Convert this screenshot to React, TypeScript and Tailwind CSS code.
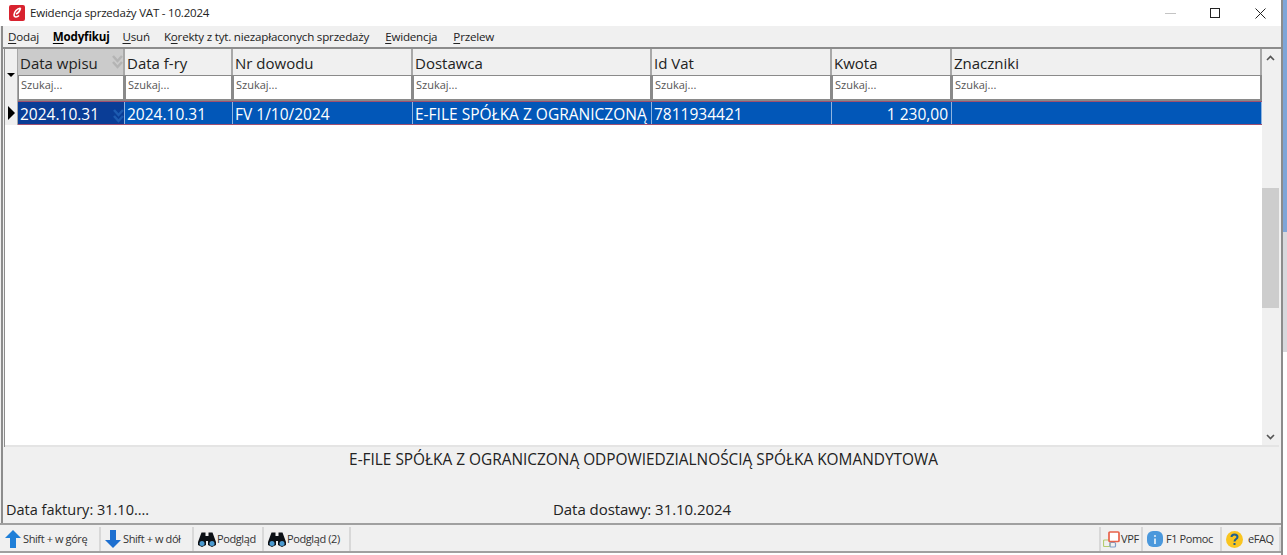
import React from "react";

const columns = [
    {label: "Data wpisu", width: "w-[107px]", value: "2024.10.31"},
    {label: "Data f-ry", width: "w-[108px]", value: "2024.10.31"},
    {label: "Nr dowodu", width: "w-[180px]", value: "FV 1/10/2024"},
    {label: "Dostawca", width: "w-[239px]", value: "E-FILE SPÓŁKA Z OGRANICZONĄ"},
    {label: "Id Vat", width: "w-[180px]", value: "7811934421"},
    {label: "Kwota", width: "w-[120px]", value: "1 230,00"},
    {label: "Znaczniki", width: "w-[310px]", value: ""},
];

function Mnemonic(props: {before?: string, letter: string, after: string, bold?: boolean, className?: string}) {
    return <span className={"whitespace-nowrap " + (props.bold ? "font-bold text-black " : "") + (props.className ?? "")}>
        {props.before}<span className="underline underline-offset-2">{props.letter}</span>{props.after}
    </span>
}

function ArrowUp() {
    return <svg width="16" height="18" viewBox="0 0 16 18" className="shrink-0">
        <path d="M8 0 L16 8 L11 8 L11 18 L5 18 L5 8 L0 8 Z" fill="#1f7fd8" />
    </svg>
}

function ArrowDown() {
    return <svg width="16" height="18" viewBox="0 0 16 18" className="shrink-0">
        <path d="M5 0 L11 0 L11 10 L16 10 L8 18 L0 10 L5 10 Z" fill="#1d6fd0" />
    </svg>
}

function Binoculars() {
    return <svg width="18" height="15" viewBox="0 0 18 15" className="shrink-0">
        <path d="M3.5 0.5 H7.5 V4 H10.5 V0.5 H14.5 L18 10 V13 L14 15 L10 13 V9 H8 V13 L4 15 L0 13 V10 Z" fill="#0c1016" />
        <circle cx="4" cy="11.5" r="2.5" fill="#4a9ad0" />
        <circle cx="14" cy="11.5" r="2.5" fill="#4a9ad0" />
    </svg>
}

function VpfIcon() {
    return <svg width="17" height="17" viewBox="0 0 17 17" className="shrink-0">
        <rect x="0.5" y="9" width="6.5" height="6.5" rx="1" fill="none" stroke="#b4cc70" strokeWidth="1.2" />
        <rect x="7" y="11.5" width="5.5" height="4.5" rx="1" fill="none" stroke="#7f9cc6" strokeWidth="1.2" />
        <rect x="6" y="1" width="10" height="9.5" rx="1" fill="#fff" stroke="#e8624a" strokeWidth="1.7" />
    </svg>
}

function InfoIcon() {
    return <svg width="16" height="16" viewBox="0 0 16 16" className="shrink-0">
        <rect width="16" height="16" rx="6" fill="#4a98dc" />
        <circle cx="8" cy="5" r="1.1" fill="#dcecf8" />
        <rect x="7.1" y="7.5" width="1.8" height="5.5" fill="#dcecf8" />
    </svg>
}

function QuestionIcon() {
    return <svg width="17" height="17" viewBox="0 0 17 17" className="shrink-0">
        <circle cx="8.5" cy="8.5" r="8.5" fill="#f9c520" />
        <path d="M5.5 6 C5.5 2.6 11.5 2.6 11.5 6 C11.5 8 8.5 8 8.5 10.5" fill="none" stroke="#1f5f8f" strokeWidth="2" />
        <rect x="7.5" y="12" width="2" height="2" fill="#1f5f8f" />
    </svg>
}

function ToolButton(props: {icon: React.ReactNode, label: string, width: string}) {
    return <div className={"flex items-center gap-[2px] pl-[4px] h-full border-r-2 border-[#d8d8d8] text-[11px] tracking-[-0.4px] text-[#333] " + props.width}>
        {props.icon}
        <span className="whitespace-nowrap">{props.label}</span>
    </div>
}

function HeaderCell(props: {label: string, width: string, sorted: boolean}) {
    return <div className={"relative flex items-center pl-[2px] pt-[3px] border-r-2 border-[#a8a8a8] text-[15px] text-[#222] whitespace-nowrap " + props.width + " " + (props.sorted ? "bg-[#cbcbcb]" : "bg-[#f0f0f0]")}>
        {props.label}
        {props.sorted && <svg width="11" height="14" viewBox="0 0 11 14" className="absolute right-0 top-[6px]">
            <path d="M1 1 L5.5 6 L10 1 M1 7 L5.5 12 L10 7" fill="none" stroke="#b4b4b4" strokeWidth="2.5" />
        </svg>}
    </div>
}

function SearchCell(props: {width: string}) {
    return <div className={"flex items-center pl-[2px] pb-[4px] bg-white border-r-2 border-b-2 border-l border-t border-[#8a8a8a] text-[11px] text-[#555] " + props.width}>
        Szukaj...
    </div>
}

function RowCell(props: {value: string, width: string, index: number}) {
    const selected = props.index === 0;
    const right = props.index === 5;
    return <div className={"relative flex items-center pl-[2px] pr-[3px] pt-[4px] border-r border-[#8fb4e0] text-[15.5px] leading-none text-white whitespace-nowrap overflow-hidden " + props.width + " " + (selected ? "bg-[#0a3d96]" : "bg-[#0257b8]") + " " + (right ? "justify-end" : "")}>
        {props.value}
        {selected && <svg width="11" height="14" viewBox="0 0 11 14" className="absolute right-0 top-[7px]">
            <path d="M1 1 L5.5 6 L10 1 M1 7 L5.5 12 L10 7" fill="none" stroke="#1d5bb0" strokeWidth="2.5" />
        </svg>}
    </div>
}

function App() {
    return <div className="flex w-[1287px] h-[555px] overflow-hidden bg-white font-['Open_Sans',sans-serif]">
        <div className="flex flex-col w-[1283px] h-full bg-[#f0f0f0] border-r-2 border-[#8c8c8c]">
            <div className="flex items-center h-[26px] shrink-0 bg-white pl-[9px] text-[11.5px] tracking-[-0.2px] text-[#222]">
                <svg width="16" height="16" viewBox="0 0 16 16" className="shrink-0">
                    <rect width="16" height="16" rx="2" fill="#d8232f" />
                    <path d="M11.5 3 C8 3.5 5 7 5 10 C5 12.5 8 12.5 10 10.5 M11.5 3 C11 6 9 8 7 9" fill="none" stroke="#fff" strokeWidth="1.6" />
                </svg>
                <span className="ml-[5px] whitespace-nowrap">Ewidencja sprzedaży VAT - 10.2024</span>
                <div className="flex items-center ml-auto pr-[15px]">
                    <div className="w-[11px] h-px bg-[#c4c4c4] mr-[34px]"></div>
                    <div className="w-[10px] h-[10px] border border-[#222] mr-[35px]"></div>
                    <svg width="11" height="11" viewBox="0 0 11 11">
                        <path d="M0.5 0.5 L10.5 10.5 M10.5 0.5 L0.5 10.5" stroke="#222" />
                    </svg>
                </div>
            </div>

            <div className="flex flex-col flex-1 min-h-0 ml-px border-l-2 border-[#8c8c8c]">
                <div className="flex items-center gap-[14px] h-[21px] shrink-0 pl-[5px] text-[11.6px] tracking-[-0.2px] text-[#222]">
                    <Mnemonic letter="D" after="odaj" />
                    <Mnemonic letter="M" after="odyfikuj" bold />
                    <Mnemonic letter="U" after="suń" className="-ml-px" />
                    <Mnemonic before="K" letter="o" after="rekty z tyt. niezapłaconych sprzedaży" />
                    <Mnemonic letter="E" after="widencja" className="ml-[2px]" />
                    <Mnemonic letter="P" after="rzelew" className="ml-[2px]" />
                </div>

                <div className="flex flex-1 min-h-0 border-t-2 border-[#8c8c8c] pl-px">
                    <div className="flex-1 min-w-0 flex flex-col bg-white border-l border-[#8c8c8c]">
                        <div className="flex">
                            <div className="flex items-center justify-center w-[13px] h-[52px] bg-[#f0f0f0] border-r border-[#a8a8a8]">
                                <div className="w-0 h-0 border-x-[4px] border-x-transparent border-t-[4px] border-t-black"></div>
                            </div>
                            <div className="flex flex-col">
                                <div className="flex h-[26px]">
                                    {columns.map((c, i) => <HeaderCell key={c.label} label={c.label} width={c.width} sorted={i === 0} />)}
                                </div>
                                <div className="flex h-[26px]">
                                    {columns.map((c) => <SearchCell key={c.label} width={c.width} />)}
                                </div>
                            </div>
                        </div>
                        <div className="flex h-[24px]">
                            <div className="flex items-center justify-center w-[13px] bg-[#f0f0f0] border-r border-[#a8a8a8]">
                                <div className="w-0 h-0 border-y-[7px] border-y-transparent border-l-[7px] border-l-black"></div>
                            </div>
                            <div className="flex border-y border-[#a04f6f]">
                                {columns.map((c, i) => <RowCell key={c.label} value={c.value} width={c.width} index={i} />)}
                            </div>
                        </div>
                        <div className="flex-1 border-b-2 border-[#e4e4e4]"></div>
                    </div>
                    <div className="flex flex-col w-[17px] shrink-0 mr-[2px] bg-[#f0f0f0] border-b-2 border-[#e4e4e4]">
                        <div className="flex items-center justify-center h-[17px]">
                            <svg width="9" height="6" viewBox="0 0 9 6"><path d="M1 5 L4.5 1.5 L8 5" fill="none" stroke="#555" strokeWidth="1.6" /></svg>
                        </div>
                        <div className="h-[120px] bg-[#cdcdcd] mt-[122px]"></div>
                        <div className="flex items-center justify-center h-[17px] mt-auto">
                            <svg width="9" height="6" viewBox="0 0 9 6"><path d="M1 1 L4.5 4.5 L8 1" fill="none" stroke="#555" strokeWidth="1.6" /></svg>
                        </div>
                    </div>
                </div>

                <div className="flex flex-col h-[76px] shrink-0 pl-[3px] text-[#222]">
                    <div className="text-center text-[15.4px] pt-px">E-FILE SPÓŁKA Z OGRANICZONĄ ODPOWIEDZIALNOŚCIĄ SPÓŁKA KOMANDYTOWA</div>
                    <div className="flex items-baseline mt-auto pb-[2px]">
                        <span className="w-[547px] text-[14.5px]">Data faktury: 31.10....</span>
                        <span className="text-[15px] tracking-[-0.05px]">Data dostawy: 31.10.2024</span>
                    </div>
                </div>
            </div>

            <div className="flex h-[30px] shrink-0 border-y-2 border-[#a0a0a0] bg-[#f0f0f0] pt-[2px]">
                <ToolButton icon={<ArrowUp />} label="Shift + w górę" width="w-[101px] !pl-[5px]" />
                <ToolButton icon={<ArrowDown />} label="Shift + w dół" width="w-[93px]" />
                <ToolButton icon={<Binoculars />} label="Podgląd" width="w-[70px] !gap-px" />
                <ToolButton icon={<Binoculars />} label="Podgląd (2)" width="w-[87px] !gap-px" />
                <div className="ml-auto flex h-full">
                    <ToolButton icon={<VpfIcon />} label="VPF" width="w-[44px] !pl-[2px] !gap-px border-l-2 border-l-[#d8d8d8]" />
                    <ToolButton icon={<InfoIcon />} label="F1 Pomoc" width="w-[79px] !gap-[3px]" />
                    <ToolButton icon={<QuestionIcon />} label="eFAQ" width="w-[59px] !gap-[5px]" />
                </div>
            </div>
            <div className="h-[2px] shrink-0 bg-white"></div>
        </div>
        <div className="flex flex-col w-[4px] h-full">
            <div className="h-[232px] bg-[#7fa6d8]"></div>
            <div className="h-[120px] bg-[#d8d8dc]"></div>
            <div className="flex-1 bg-white"></div>
        </div>
    </div>
}

export default App;
